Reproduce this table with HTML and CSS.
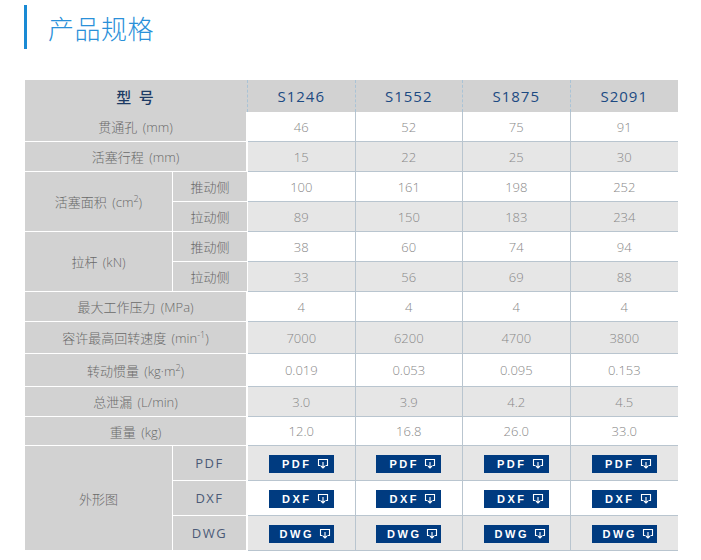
FILE: index.html
```html
<!DOCTYPE html>
<html lang="zh-CN">
<head>
<meta charset="utf-8">
<title>产品规格</title>
<link rel="stylesheet" href="styles.css">
</head>
<body>
<div class="page">
  <h2 class="title">产品规格</h2>
  <table class="spec">
    <colgroup>
      <col class="c1"><col class="c2"><col class="cd"><col class="cd"><col class="cd"><col class="cd">
    </colgroup>
    <thead>
      <tr class="h32">
        <th colspan="2" class="hlab">型 号</th>
        <th>S1246</th><th>S1552</th><th>S1875</th><th>S2091</th>
      </tr>
    </thead>
    <tbody>
      <tr class="h30">
        <td colspan="2" class="lab">贯通孔 (mm)</td>
        <td class="d">46</td><td class="d">52</td><td class="d">75</td><td class="d last">91</td>
      </tr>
      <tr class="h30 g">
        <td colspan="2" class="lab">活塞行程 (mm)</td>
        <td class="d">15</td><td class="d">22</td><td class="d">25</td><td class="d last">30</td>
      </tr>
      <tr class="h30">
        <td rowspan="2" class="lab">活塞面积 (cm<sup>2</sup>)</td>
        <td class="lab">推动侧</td>
        <td class="d">100</td><td class="d">161</td><td class="d">198</td><td class="d last">252</td>
      </tr>
      <tr class="h30 g">
        <td class="lab">拉动侧</td>
        <td class="d">89</td><td class="d">150</td><td class="d">183</td><td class="d last">234</td>
      </tr>
      <tr class="h30">
        <td rowspan="2" class="lab">拉杆 (kN)</td>
        <td class="lab">推动侧</td>
        <td class="d">38</td><td class="d">60</td><td class="d">74</td><td class="d last">94</td>
      </tr>
      <tr class="h30 g">
        <td class="lab">拉动侧</td>
        <td class="d">33</td><td class="d">56</td><td class="d">69</td><td class="d last">88</td>
      </tr>
      <tr class="h30">
        <td colspan="2" class="lab">最大工作压力 (MPa)</td>
        <td class="d">4</td><td class="d">4</td><td class="d">4</td><td class="d last">4</td>
      </tr>
      <tr class="h32 g">
        <td colspan="2" class="lab">容许最高回转速度 (min<sup>-1</sup>)</td>
        <td class="d">7000</td><td class="d">6200</td><td class="d">4700</td><td class="d last">3800</td>
      </tr>
      <tr class="h33">
        <td colspan="2" class="lab">转动惯量 (kg·m<sup>2</sup>)</td>
        <td class="d">0.019</td><td class="d">0.053</td><td class="d">0.095</td><td class="d last">0.153</td>
      </tr>
      <tr class="h30 g">
        <td colspan="2" class="lab">总泄漏 (L/min)</td>
        <td class="d">3.0</td><td class="d">3.9</td><td class="d">4.2</td><td class="d last">4.5</td>
      </tr>
      <tr class="h29">
        <td colspan="2" class="lab">重量 (kg)</td>
        <td class="d">12.0</td><td class="d">16.8</td><td class="d">26.0</td><td class="d last">33.0</td>
      </tr>
      <tr class="h35 g">
        <td rowspan="3" class="lab">外形图</td>
        <td class="lab ft">PDF</td>
        <td class="d"><a class="btn" href="#">PDF<svg class="ico" viewBox="0 0 12 11" width="12" height="11"><path d="M3.5 7.5H1.5V1.5h9v6H8.5" /><path d="M6 4v6M4 8l2 2 2-2" /></svg></a></td>
        <td class="d"><a class="btn" href="#">PDF<svg class="ico" viewBox="0 0 12 11" width="12" height="11"><path d="M3.5 7.5H1.5V1.5h9v6H8.5" /><path d="M6 4v6M4 8l2 2 2-2" /></svg></a></td>
        <td class="d"><a class="btn" href="#">PDF<svg class="ico" viewBox="0 0 12 11" width="12" height="11"><path d="M3.5 7.5H1.5V1.5h9v6H8.5" /><path d="M6 4v6M4 8l2 2 2-2" /></svg></a></td>
        <td class="d last"><a class="btn" href="#">PDF<svg class="ico" viewBox="0 0 12 11" width="12" height="11"><path d="M3.5 7.5H1.5V1.5h9v6H8.5" /><path d="M6 4v6M4 8l2 2 2-2" /></svg></a></td>
      </tr>
      <tr class="h35">
        <td class="lab ft">DXF</td>
        <td class="d"><a class="btn" href="#">DXF<svg class="ico" viewBox="0 0 12 11" width="12" height="11"><path d="M3.5 7.5H1.5V1.5h9v6H8.5" /><path d="M6 4v6M4 8l2 2 2-2" /></svg></a></td>
        <td class="d"><a class="btn" href="#">DXF<svg class="ico" viewBox="0 0 12 11" width="12" height="11"><path d="M3.5 7.5H1.5V1.5h9v6H8.5" /><path d="M6 4v6M4 8l2 2 2-2" /></svg></a></td>
        <td class="d"><a class="btn" href="#">DXF<svg class="ico" viewBox="0 0 12 11" width="12" height="11"><path d="M3.5 7.5H1.5V1.5h9v6H8.5" /><path d="M6 4v6M4 8l2 2 2-2" /></svg></a></td>
        <td class="d last"><a class="btn" href="#">DXF<svg class="ico" viewBox="0 0 12 11" width="12" height="11"><path d="M3.5 7.5H1.5V1.5h9v6H8.5" /><path d="M6 4v6M4 8l2 2 2-2" /></svg></a></td>
      </tr>
      <tr class="h35 g">
        <td class="lab ft">DWG</td>
        <td class="d"><a class="btn" href="#">DWG<svg class="ico" viewBox="0 0 12 11" width="12" height="11"><path d="M3.5 7.5H1.5V1.5h9v6H8.5" /><path d="M6 4v6M4 8l2 2 2-2" /></svg></a></td>
        <td class="d"><a class="btn" href="#">DWG<svg class="ico" viewBox="0 0 12 11" width="12" height="11"><path d="M3.5 7.5H1.5V1.5h9v6H8.5" /><path d="M6 4v6M4 8l2 2 2-2" /></svg></a></td>
        <td class="d"><a class="btn" href="#">DWG<svg class="ico" viewBox="0 0 12 11" width="12" height="11"><path d="M3.5 7.5H1.5V1.5h9v6H8.5" /><path d="M6 4v6M4 8l2 2 2-2" /></svg></a></td>
        <td class="d last"><a class="btn" href="#">DWG<svg class="ico" viewBox="0 0 12 11" width="12" height="11"><path d="M3.5 7.5H1.5V1.5h9v6H8.5" /><path d="M6 4v6M4 8l2 2 2-2" /></svg></a></td>
      </tr>
    </tbody>
  </table>
</div>
</body>
</html>
```
FILE: styles.css
```css
html, body {
  margin: 0;
  padding: 0;
  background: #fff;
}
body {
  font-family: "Open Sans", "Noto Sans CJK SC", sans-serif;
}
.page {
  padding: 5px 0 0 24px;
}
.title {
  margin: 0;
  height: 44px;
  border-left: 3px solid #1a8ad4;
  padding-left: 21px;
  font-family: "Noto Sans CJK SC", sans-serif;
  font-weight: 300;
  font-size: 26px;
  line-height: 46px;
  color: #2a90d9;
  letter-spacing: 0.5px;
}
.spec {
  margin: 31px 0 0 1px;
  border-collapse: separate;
  border-spacing: 0;
  table-layout: fixed;
  width: 653px;
}
.c1 { width: 148px; }
.c2 { width: 75px; }
.cd { width: 107.5px; }
th, td {
  padding: 0;
  text-align: center;
  vertical-align: middle;
  font-weight: normal;
}
.h29 { height: 29px; }
.h30 { height: 30px; }
.h32 { height: 32px; }
.h33 { height: 33px; }
.h35 { height: 35px; }
thead th {
  background: #d2d2d2;
  font-size: 15px;
  color: #1c4a82;
  letter-spacing: 1px;
  border-right: 1px dashed #a9c3d6;
}
thead th:last-child {
  border-right: 0;
}
thead .hlab {
  font-family: "Noto Sans CJK SC", sans-serif;
  font-weight: 500;
  color: #1c3a64;
  letter-spacing: 2px;
}
.lab {
  background: #d2d2d2;
  color: #6a6a6a;
  font-size: 13px;
  font-weight: 300;
  word-spacing: 2px;
  border-bottom: 1px solid #fff;
  border-right: 1px solid #fff;
}
.lab sup, .d sup {
  font-size: 9px;
  line-height: 0;
}
.lab.ft {
  border-right: 2px solid #fff;
  color: #4b5a77;
  font-size: 13px;
  font-weight: normal;
  letter-spacing: 1.5px;
}
tbody tr > td.lab:first-child[colspan] {
  border-right: 2px solid #fff;
}
.d {
  background: #fff;
  color: #888;
  font-size: 13px;
  font-weight: 300;
  border-bottom: 1px solid #b9c5cf;
  border-right: 1px solid #b9c5cf;
}
.d.last {
  border-right: 0;
}
tr.g .d {
  background: #e6e6e6;
}
.btn {
  display: inline-flex;
  align-items: center;
  justify-content: center;
  gap: 5px;
  box-sizing: border-box;
  width: 65px;
  height: 18px;
  padding-left: 8px;
  background: #003b80;
  color: #fff;
  text-decoration: none;
  font-family: "Liberation Sans", sans-serif;
  font-weight: bold;
  font-size: 11px;
  letter-spacing: 2.5px;
  vertical-align: middle;
}
.ico {
  fill: none;
  stroke: #fff;
  stroke-width: 1.1;
  display: block;
}
```
